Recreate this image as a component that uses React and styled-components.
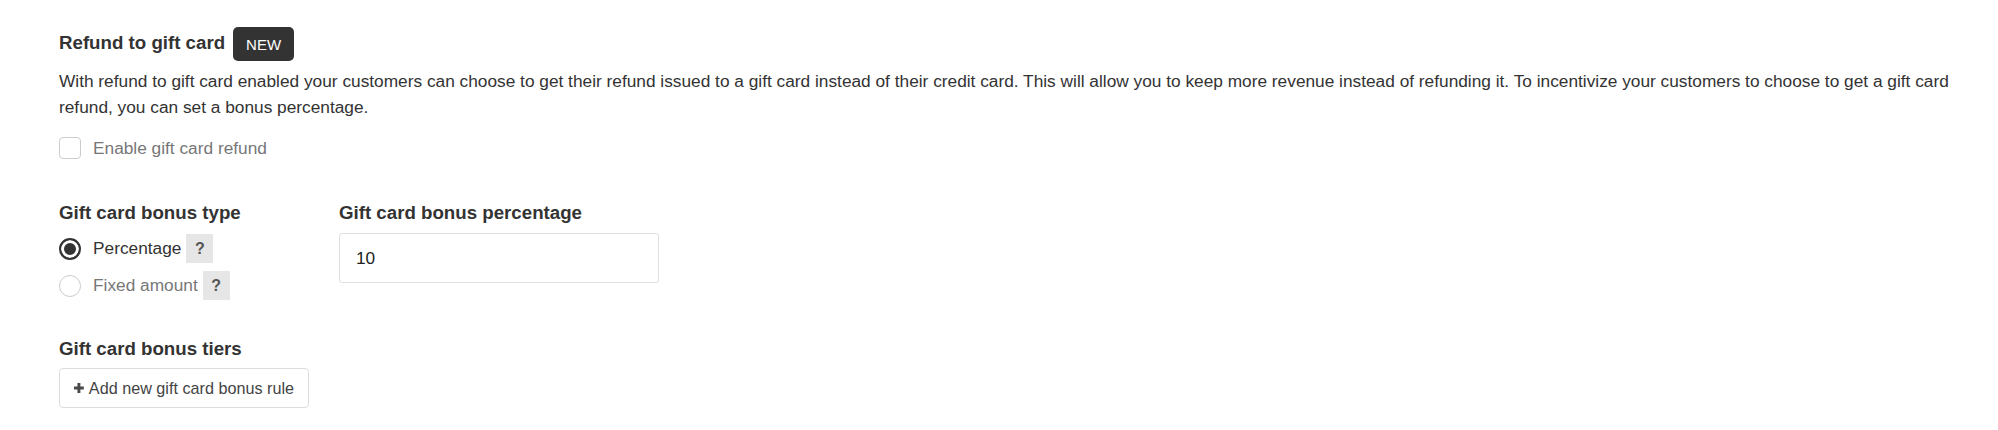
import styled, { createGlobalStyle } from 'styled-components'

const Global = createGlobalStyle`
  body {
    margin: 0;
    background: #fff;
    font-family: "Liberation Sans", Arial, Helvetica, sans-serif;
    color: #333;
  }
`

function HelpTip() {
  return <Help title="Help">?</Help>
}

function App() {
  return (
    <Page>
      <Global />
      <TitleRow>
        <Title>Refund to gift card</Title>
        <Badge>NEW</Badge>
      </TitleRow>
      <Text>
        With refund to gift card enabled your customers can choose to get their refund issued to a gift card instead of their credit card. This will allow you to keep more revenue instead of refunding it. To incentivize your customers to choose to get a gift card refund, you can set a bonus percentage.
      </Text>
      <CheckRow>
        <Box type="checkbox" />
        <span>Enable gift card refund</span>
      </CheckRow>

      <Columns>
        <Field>
          <Heading>Gift card bonus type</Heading>
          <Options>
            <Option>
              <Radio $checked />
              <OptionLabel $active>Percentage</OptionLabel>
              <HelpTip />
            </Option>
            <Option>
              <Radio />
              <OptionLabel>Fixed amount</OptionLabel>
              <HelpTip />
            </Option>
          </Options>
        </Field>
        <Field>
          <Heading>Gift card bonus percentage</Heading>
          <Input defaultValue="10" />
        </Field>
      </Columns>

      <Tiers>
        <Heading>Gift card bonus tiers</Heading>
        <AddButton>
          <svg width="16" height="16" viewBox="0 0 16 16">
            <path d="M5.6 0h4.8v5.6H16v4.8h-5.6V16H5.6v-5.6H0V5.6h5.6z" fill="#4a4a4a" />
          </svg>
          Add new gift card bonus rule
        </AddButton>
      </Tiers>
    </Page>
  )
}

export default App

const Page = styled.div`
  padding: 27px 30px 20px 59px;
  box-sizing: border-box;
  width: 1998px;
`

const TitleRow = styled.div`
  display: flex;
  align-items: flex-start;
  gap: 8px;
  height: 34px;
`

const Title = styled.h3`
  margin: 4px 0 0;
  font-size: 18.7px;
  line-height: 24px;
  font-weight: 700;
  color: #333;
`

const Badge = styled.span`
  display: inline-flex;
  align-items: center;
  height: 34px;
  padding: 0 13px;
  border-radius: 5px;
  background: #333;
  color: #fff;
  font-size: 15px;
`

const Text = styled.p`
  margin: 8px 0 0;
  font-size: 17.3px;
  line-height: 25.5px;
  color: #333;
`

const CheckRow = styled.label`
  display: flex;
  align-items: center;
  gap: 12px;
  margin-top: 17px;
  height: 22px;
  font-size: 17.3px;
  color: #777;
`

const Box = styled.input`
  appearance: none;
  margin: 0;
  width: 22px;
  height: 22px;
  border: 1px solid #ccc;
  border-radius: 4px;
  background: #fff;
  box-sizing: border-box;
`

const Columns = styled.div`
  display: grid;
  grid-template-columns: 280px 320px;
  margin-top: 42px;
`

const Field = styled.div`
  display: flex;
  flex-direction: column;
`

const Heading = styled.h4`
  margin: 0;
  font-size: 18.7px;
  line-height: 24px;
  font-weight: 700;
  color: #333;
`

const Options = styled.div`
  display: flex;
  flex-direction: column;
  margin-top: 5px;
`

const Option = styled.label`
  display: flex;
  align-items: center;
  height: 37px;
  font-size: 17.3px;
`

const Radio = styled.span`
  width: 22px;
  height: 22px;
  box-sizing: border-box;
  border-radius: 50%;
  border: ${p => (p.$checked ? '2px solid #333' : '1px solid #ccc')};
  background: ${p => (p.$checked ? '#333' : '#fff')};
  box-shadow: ${p => (p.$checked ? 'inset 0 0 0 3px #fff' : 'none')};
  margin-right: 12px;
  flex-shrink: 0;
`

const OptionLabel = styled.span`
  color: ${p => (p.$active ? '#333' : '#777')};
`

const Help = styled.span`
  display: inline-flex;
  align-items: center;
  justify-content: center;
  width: 27px;
  height: 29px;
  margin-left: 5px;
  background: #e6e6e6;
  color: #555;
  font-size: 16px;
  font-weight: 700;
`

const Input = styled.input`
  margin-top: 8px;
  width: 320px;
  height: 50px;
  box-sizing: border-box;
  border: 1px solid #e0e0e0;
  border-radius: 3px;
  padding: 0 16px;
  font-family: inherit;
  font-size: 17.3px;
  color: #222;
  outline: none;
`

const Tiers = styled.div`
  display: flex;
  flex-direction: column;
  align-items: flex-start;
  margin-top: 33px;
`

const AddButton = styled.button`
  display: inline-flex;
  align-items: center;
  gap: 5px;
  margin-top: 7px;
  width: 250px;
  height: 40px;
  padding: 0 14px;
  box-sizing: border-box;
  border: 1px solid #ddd;
  border-radius: 4px;
  background: #fff;
  font-family: inherit;
  font-size: 16.2px;
  color: #444;
  white-space: nowrap;
`
